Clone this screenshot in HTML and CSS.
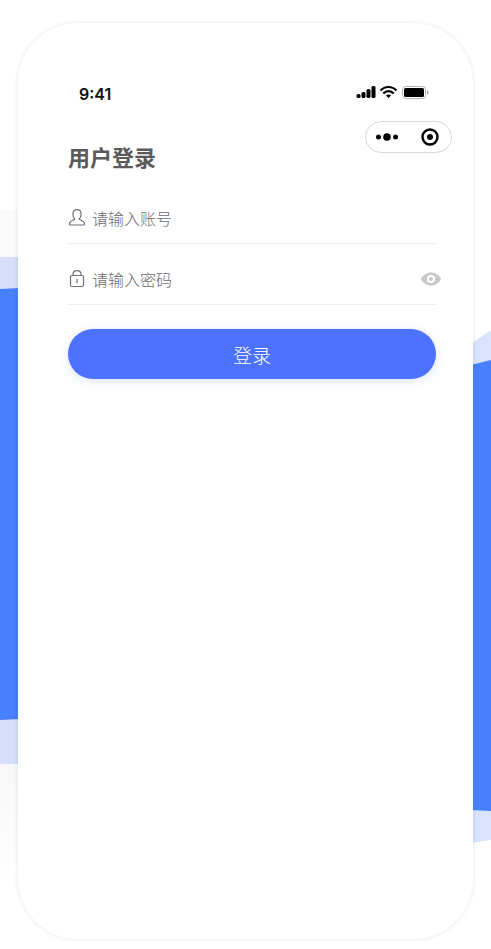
FILE: index.html
```
<!DOCTYPE html>
<html lang="zh-CN">
<head>
    <meta charset="utf-8">
    <title>用户登录</title>
    <meta name="viewport" content="width=device-width, initial-scale=1">
    <link rel="stylesheet" href="styles.css">
</head>
<body>
<div class="stage">
    <!-- blue ribbon behind the phone -->
    <svg class="backdrop" viewBox="0 0 491 949" preserveAspectRatio="none" aria-hidden="true">
        <defs>
            <linearGradient id="haze" x1="0" y1="0" x2="1" y2="0">
                <stop offset="0" stop-color="#dcdffe"/>
                <stop offset="1" stop-color="#d0def4"/>
            </linearGradient>
            <linearGradient id="floor" x1="0" y1="0" x2="0" y2="1">
                <stop offset="0" stop-color="#fafafa"/>
                <stop offset="0.85" stop-color="#f8f8f8"/>
                <stop offset="1" stop-color="#fefefe"/>
            </linearGradient>
        </defs>
        <path d="M0 209H20V860L0 880Z" fill="url(#floor)"/>
        <path d="M0 257H20V764H0Z" fill="url(#haze)"/>
        <path d="M0 289L20 288V719L0 720Z" fill="#477ffc"/>
        <path d="M471 344L491 330V840L471 843Z" fill="#d8e3fd"/>
        <path d="M471 365L491 360V811L471 810Z" fill="#477ffc"/>
    </svg>

    <main class="phone">
        <div class="status-bar">
            <span class="time">9:41</span>
            <svg class="status-icons" width="73" height="14" viewBox="0 0 73 14" aria-hidden="true">
                <rect x="0.5" y="9" width="4" height="4" rx="1.5"/>
                <rect x="5.5" y="7" width="4" height="6" rx="1.5"/>
                <rect x="10.5" y="4" width="4" height="9" rx="1.5"/>
                <rect x="15.5" y="1" width="4" height="12" rx="1.5"/>
                <path d="M24.5 5.6C29 0.8 36 0.8 40.5 5.6M27.3 8.5C30.2 5.3 34.8 5.3 37.7 8.5" fill="none" stroke="#000" stroke-width="2.2"/>
                <path d="M30 10.5C31.2 9.2 33.8 9.2 35 10.5L32.5 13Z"/>
                <rect x="46.5" y="1.5" width="23" height="12" rx="3" fill="none" stroke="#b5b5b5"/>
                <rect x="48" y="3" width="20" height="9" rx="1.5"/>
                <path d="M71 5.5Q72.5 6 72.5 7.5T71 9.5Z" fill="#999"/>
            </svg>
        </div>

        <div class="header">
            <h1 class="title">用户登录</h1>
            <div class="capsule">
                <button class="capsule-btn" type="button" aria-label="更多">
                    <svg width="24" height="10" viewBox="0 0 24 10">
                        <circle cx="3.5" cy="5" r="2.5"/>
                        <circle cx="12" cy="5" r="3.8"/>
                        <circle cx="20.5" cy="5" r="2.5"/>
                    </svg>
                </button>
                <button class="capsule-btn" type="button" aria-label="关闭">
                    <svg width="18" height="18" viewBox="0 0 18 18">
                        <circle cx="9" cy="9" r="7.5" fill="none" stroke="#000" stroke-width="2.4"/>
                        <circle cx="9" cy="9" r="3"/>
                    </svg>
                </button>
            </div>
        </div>

        <form class="login-form" onsubmit="return false;">
            <div class="field">
                <label for="account" aria-label="账号">
                    <svg class="field-icon" width="18" height="18" viewBox="0 0 18 18">
                        <path d="M6.8 10C5.5 9 4.9 7.3 4.9 5.3C4.9 2.5 6.5 0.7 9 0.7S13.1 2.5 13.1 5.3C13.1 7.3 12.5 9 11.2 10C11.5 11 16.5 11.5 16.5 14.7V15.3Q16.5 16 15.8 16H2.2Q1.5 16 1.5 15.3V14.7C1.5 11.5 6.500 11 6.8 10Z"/>
                    </svg>
                </label>
                <input id="account" type="text" placeholder="请输入账号">
            </div>
            <div class="field">
                <label for="password" aria-label="密码">
                    <svg class="field-icon" width="18" height="18" viewBox="0 0 18 18">
                        <rect x="2.5" y="5.5" width="13" height="11" rx="1.5"/>
                        <path d="M5 5.500V4.500C5 2.200 6.700 0.700 9 0.700S13 2.200 13 4.500V5.500M9 9V13"/>
                    </svg>
                </label>
                <input id="password" type="password" placeholder="请输入密码">
                <button class="eye" type="button" aria-label="显示密码">
                    <svg width="22" height="14" viewBox="0 0 22 14">
                        <path d="M1 7C3 3 6.5 0.5 11 0.5S19 3 21 7C19 11 15.5 13.5 11 13.5S3 11 1 7Z" fill="#c8c8c8"/>
                        <circle cx="11" cy="7" r="4" fill="#fff"/>
                        <circle cx="11" cy="7" r="2" fill="#c8c8c8"/>
                    </svg>
                </button>
            </div>
            <button class="submit" type="submit">登录</button>
        </form>
    </main>
</div>
</body>
</html>
```
FILE: styles.css
```
* {
    box-sizing: border-box;
}

body {
    margin: 0;
    color: #5a5a5a;
    background-color: #ffffff;
    font-family: "Noto Sans CJK SC", sans-serif;
}

button {
    border: 0;
    padding: 0;
    background: none;
    font-family: inherit;
    cursor: pointer;
}

svg {
    display: block;
}

.stage {
    position: relative;
    display: flex;
    min-height: 100vh;
    padding: 23px 18px 10px;
}

.backdrop {
    position: absolute;
    inset: 0;
    width: 100%;
    height: 100%;
}

.phone {
    position: relative;
    flex: 1;
    padding-top: 60px;
    border-radius: 60px;
    background-color: #ffffff;
    box-shadow: 0 0 5px rgba(0, 0, 0, 0.1);
}

.status-bar {
    display: flex;
    justify-content: space-between;
    padding: 0 44px 0 61px;
}

.time {
    color: #111111;
    font-family: Inter, sans-serif;
    font-size: 16px;
    font-weight: 600;
    line-height: 22px;
}

.status-icons {
    margin-top: 2px;
}

.header {
    display: flex;
    justify-content: space-between;
    align-items: flex-start;
    margin-top: 16px;
    padding: 0 21px 0 50px;
}

.title {
    margin: 19px 0 0;
    font-size: 22px;
    font-weight: bold;
    line-height: 32px;
}

.capsule {
    display: flex;
    width: 87px;
    height: 32px;
    border: 1px solid #d8d8d8;
    border-radius: 16px;
}

.capsule-btn {
    display: flex;
    flex: 1;
    align-items: center;
    justify-content: center;
}

.login-form {
    margin-top: 11px;
    padding: 0 37px 0 50px;
}

.field {
    position: relative;
    display: flex;
    align-items: center;
    gap: 6px;
    height: 61px;
    padding-top: 10px;
    border-bottom: 1px solid #eeeeee;
}

.field-icon {
    fill: none;
    stroke: #707070;
    stroke-width: 1.2;
}

.field input {
    flex: 1;
    min-width: 0;
    padding: 0;
    border: 0;
    outline: 0;
    background: none;
    color: #5a5a5a;
    font-family: inherit;
    font-size: 16px;
    line-height: 24px;
}

.field input::placeholder {
    color: #6c6c6c;
    font-weight: 300;
}

/* sticks out a little past the underline */
.eye {
    position: absolute;
    top: 28px;
    right: -6px;
}

.submit {
    width: 100%;
    height: 50px;
    margin-top: 24px;
    border-radius: 25px;
    background-color: #4c72ff;
    box-shadow: 0 2px 10px rgba(76, 114, 255, 0.2);
    color: #ffffff;
    font-size: 19px;
    font-weight: 300;
}
```
